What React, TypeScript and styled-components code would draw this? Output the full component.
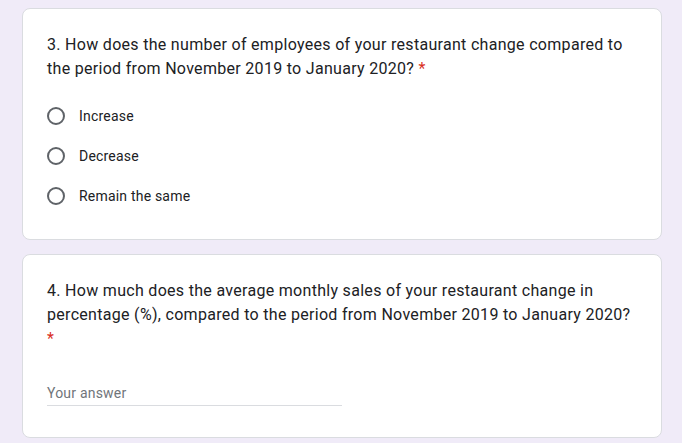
import React from "react";
import styled, { createGlobalStyle } from "styled-components";

const Global = createGlobalStyle`
  html, body { margin: 0; padding: 0; background: #f0ebf8; }
  body { font-family: Roboto, "Liberation Sans", Arial, sans-serif; }
`;

const Page = styled.div`
  padding: 8px 20px 0 22px;
  display: flex;
  flex-direction: column;
  gap: 14px;
  width: 640px;
`;

const Card = styled.div<{ $h: number }>`
  box-sizing: border-box;
  height: ${(p) => p.$h}px;
  background: #fff;
  border: 1px solid #dadce0;
  border-radius: 8px;
  padding: 24px;
`;

const Title = styled.div`
  font-size: 16px;
  line-height: 24px;
  color: #202124;
  letter-spacing: 0.3px;
`;

const Req = styled.span`
  color: #d93025;
`;

const Options = styled.div`
  margin-top: 15px;
  display: flex;
  flex-direction: column;
`;

const Option = styled.label`
  height: 40px;
  display: flex;
  align-items: center;
  gap: 14px;
  font-size: 14px;
  color: #202124;
  letter-spacing: 0.2px;
`;

const Radio = styled.span`
  box-sizing: border-box;
  width: 18px;
  height: 18px;
  border: 2px solid #5f6368;
  border-radius: 50%;
  flex: none;
`;

const InputWrap = styled.div`
  margin-top: 30px;
  width: 295px;
  border-bottom: 1px solid #dadce0;
  height: 24px;
  font-size: 14px;
  line-height: 24px;
  color: #70757a;
  letter-spacing: 0.2px;
`;

export default function App() {
  return (
    <>
      <Global />
      <Page>
        <Card $h={232}>
          <Title>
            3. How does the number of employees of your restaurant change compared to the period from
            November 2019 to January 2020? <Req>*</Req>
          </Title>
          <Options>
            {["Increase", "Decrease", "Remain the same"].map((o) => (
              <Option key={o}>
                <Radio />
                {o}
              </Option>
            ))}
          </Options>
        </Card>
        <Card $h={184}>
          <Title>
            4. How much does the average monthly sales of your restaurant change in percentage (%),
            compared to the period from November 2019 to January 2020? <Req>*</Req>
          </Title>
          <InputWrap>Your answer</InputWrap>
        </Card>
      </Page>
    </>
  );
}
